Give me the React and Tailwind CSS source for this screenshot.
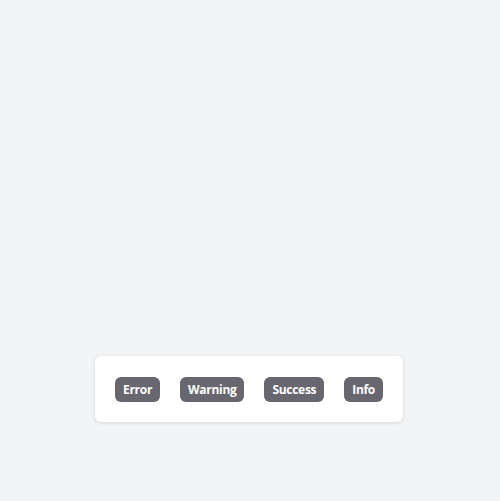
export default function App() {
  const labels = ["Error", "Warning", "Success", "Info"];
  return (
    <div className="min-h-screen bg-[#f3f4f6] flex flex-col items-center justify-end pb-[79px]" style={{ fontFamily: "'Open Sans', sans-serif" }}>
      <div className="mr-[2px] bg-white rounded-md shadow-[0_1px_4px_rgba(0,0,0,0.12)] flex gap-5 px-5 pt-[21px] pb-5">
        {labels.map((l) => (
          <button key={l} className="h-[25px] px-2 rounded-md bg-[#68676f] text-white text-[12px] font-bold tracking-[-0.3px] leading-none">
            {l}
          </button>
        ))}
      </div>
    </div>
  );
}
